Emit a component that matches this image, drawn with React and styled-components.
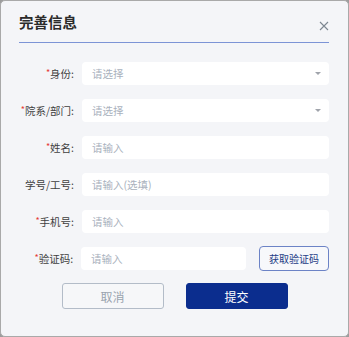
import styled, { createGlobalStyle } from "styled-components";

const GlobalStyle = createGlobalStyle`
  html, body {
    margin: 0;
    padding: 0;
    background: #9c9c9c;
  }
  * {
    box-sizing: border-box;
  }
`;

const Dialog = styled.div`
  width: 349px;
  height: 337px;
  background: #f4f5f8;
  border: 1px solid #a9a9a9;
  border-radius: 5px;
  padding: 0 19px 0 18px;
  font-family: "Noto Sans CJK SC", "Noto Sans", sans-serif;
  display: flex;
  flex-direction: column;
`;

const Header = styled.div`
  height: 42px;
  display: flex;
  align-items: flex-start;
  justify-content: space-between;
  border-bottom: 1px solid #7c94d6;
  padding-top: 11px;
`;

const Title = styled.h2`
  margin: 0;
  font-size: 14.5px;
  line-height: 20px;
  font-weight: 700;
  color: #2b2b2b;
`;

const Close = styled.button`
  border: none;
  background: none;
  padding: 0;
  margin: 9px 0 0 0;
  width: 10px;
  height: 10px;
  display: flex;
  cursor: pointer;
`;

const Form = styled.div`
  display: flex;
  flex-direction: column;
  gap: 14px;
  padding-top: 19px;
`;

const Row = styled.div`
  display: flex;
  align-items: center;
  height: 23px;
`;

const Label = styled.label`
  width: 55px;
  margin-right: 8px;
  text-align: right;
  font-size: 10.5px;
  color: #3f3f3f;
  white-space: nowrap;
`;

const Star = styled.span`
  color: #e53935;
  font-size: 9px;
  vertical-align: top;
`;

const Field = styled.div`
  position: relative;
  flex: ${(p) => (p.$narrow ? "0 0 165px" : "1")};
  height: 23px;
  background: #fff;
  border-radius: 4px;
  display: flex;
  align-items: center;
  padding-left: 10px;
  font-size: 10.5px;
  color: #a9b1bd;
`;

const Arrow = styled.span`
  position: absolute;
  right: 8px;
  top: 10px;
  width: 0;
  height: 0;
  border-left: 3px solid transparent;
  border-right: 3px solid transparent;
  border-top: 3px solid #a0a4ab;
`;

const CodeButton = styled.button`
  margin-left: 13px;
  width: 71px;
  height: 25px;
  border: 1px solid #6c83c6;
  border-radius: 4px;
  background: #f7f8fb;
  color: #233c86;
  font-family: inherit;
  font-size: 10px;
  padding: 0;
`;

const Actions = styled.div`
  display: flex;
  justify-content: center;
  gap: 22px;
  margin-top: 13px;
  padding-left: 1px;
`;

const ActionButton = styled.button`
  width: 102px;
  height: 26px;
  border-radius: 3px;
  font-family: inherit;
  font-size: 12px;
  padding: 0;
  border: 1px solid ${(p) => (p.$primary ? "#0b2d8e" : "#b3bcc8")};
  background: ${(p) => (p.$primary ? "#0b2d8e" : "#f6f7f9")};
  color: ${(p) => (p.$primary ? "#fff" : "#9aa3ae")};
`;

const fields = [
  { label: "身份", required: true, placeholder: "请选择", select: true },
  { label: "院系/部门", required: true, placeholder: "请选择", select: true },
  { label: "姓名", required: true, placeholder: "请输入" },
  { label: "学号/工号", required: false, placeholder: "请输入(选填)" },
  { label: "手机号", required: true, placeholder: "请输入" },
];

export default function App() {
  return (
    <>
      <GlobalStyle />
      <Dialog>
        <Header>
          <Title>完善信息</Title>
          <Close aria-label="关闭">
            <svg width="10" height="10" viewBox="0 0 10 10">
              <path d="M1 1L9 9M9 1L1 9" stroke="#7d8791" strokeWidth="1.1" fill="none" />
            </svg>
          </Close>
        </Header>
        <Form>
          {fields.map((f) => (
            <Row key={f.label}>
              <Label>
                {f.required && <Star>*</Star>}
                {f.label}:
              </Label>
              <Field>
                {f.placeholder}
                {f.select && <Arrow />}
              </Field>
            </Row>
          ))}
          <Row>
            <Label>
              <Star>*</Star>验证码:
            </Label>
            <Field $narrow>请输入</Field>
            <CodeButton>获取验证码</CodeButton>
          </Row>
        </Form>
        <Actions>
          <ActionButton>取消</ActionButton>
          <ActionButton $primary>提交</ActionButton>
        </Actions>
      </Dialog>
    </>
  );
}
